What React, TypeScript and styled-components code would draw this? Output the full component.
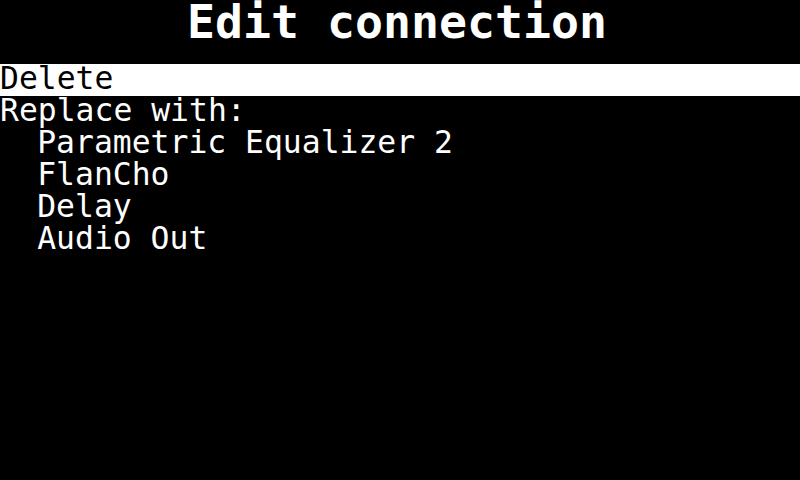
import React from "react";
import styled, { createGlobalStyle } from "styled-components";

const Global = createGlobalStyle`
  html, body { margin: 0; padding: 0; background: #000; }
  body { width: 800px; height: 480px; overflow: hidden; }
`;

const Screen = styled.div`
  width: 800px;
  height: 480px;
  background: #000;
  color: #fff;
  font-family: "DejaVu Sans Mono", monospace;
  display: flex;
  flex-direction: column;
`;

const Title = styled.h1`
  margin: 0;
  height: 64px;
  display: flex;
  align-items: flex-start;
  justify-content: center;
  font-size: 46.5px;
  font-weight: bold;
  line-height: 44px;
  padding-right: 6px;
  box-sizing: border-box;
`;

const Menu = styled.ul`
  list-style: none;
  margin: 0;
  padding: 0;
  display: flex;
  flex-direction: column;
`;

const Item = styled.li<{ $selected?: boolean; $indent?: number }>`
  height: 32px;
  box-sizing: border-box;
  padding-bottom: 3px;
  line-height: 29px;
  font-size: 31.4px;
  white-space: pre;
  padding-left: ${(p) => (p.$indent ?? 0) * 18.6}px;
  background: ${(p) => (p.$selected ? "#fff" : "#000")};
  color: ${(p) => (p.$selected ? "#000" : "#fff")};
`;

const items = [
  { label: "Delete", selected: true, indent: 0 },
  { label: "Replace with:", indent: 0 },
  { label: "Parametric Equalizer 2", indent: 2 },
  { label: "FlanCho", indent: 2 },
  { label: "Delay", indent: 2 },
  { label: "Audio Out", indent: 2 },
];

export default function App() {
  return (
    <Screen>
      <Global />
      <Title>Edit connection</Title>
      <Menu>
        {items.map((it) => (
          <Item key={it.label} $selected={it.selected} $indent={it.indent}>
            {it.label}
          </Item>
        ))}
      </Menu>
    </Screen>
  );
}
